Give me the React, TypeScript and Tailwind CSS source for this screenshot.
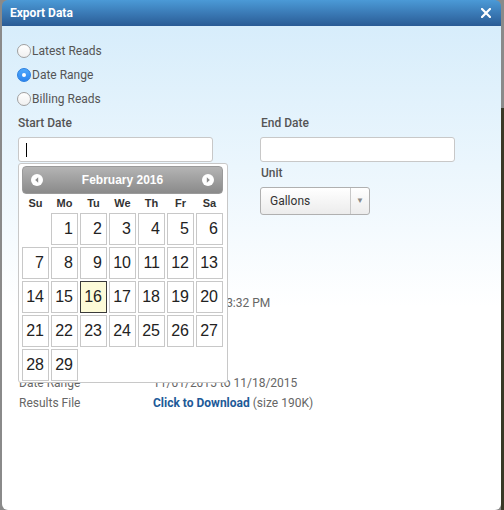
import React from "react";

function Radio({ checked, label }: { checked?: boolean; label: string }) {
  return (
    <div className="flex items-center h-[24px]">
      {checked ? (
        <span className="w-[14px] h-[14px] rounded-full bg-[linear-gradient(to_bottom,#4ea7fb,#2d86f0)] border border-[#2a7fe0] flex items-center justify-center">
          <span className="w-[4px] h-[4px] rounded-full bg-white" />
        </span>
      ) : (
        <span className="w-[14px] h-[14px] rounded-full bg-[linear-gradient(to_bottom,#ffffff,#f0f0f0)] border border-[#a0a0a0]" />
      )}
      <span className="ml-[1px] text-[12px] text-[#555]">{label}</span>
    </div>
  );
}

function NavIcon({ dir }: { dir: "prev" | "next" }) {
  return (
    <svg width="12" height="12" viewBox="0 0 12 12">
      <circle cx="6" cy="6" r="6" fill="#ffffff" />
      {dir === "prev" ? (
        <path d="M7.2 3.3 L4.2 6 L7.2 8.7 Z" fill="#8a8a8a" />
      ) : (
        <path d="M4.8 3.3 L7.8 6 L4.8 8.7 Z" fill="#8a8a8a" />
      )}
    </svg>
  );
}

function Calendar() {
  const cells: (number | null)[] = [null];
  for (let i = 1; i <= 29; i++) cells.push(i);
  const names = ["Su", "Mo", "Tu", "We", "Th", "Fr", "Sa"];
  return (
    <div className="absolute left-0 top-[52px] w-[210px] bg-white border border-[#c8c8c8] rounded-[3px] pt-[2px] pl-[3px] pr-[4px] pb-[1px] font-['Liberation_Sans',Arial,sans-serif] z-10">
      <div className="h-[28px] rounded-[4px] bg-[linear-gradient(to_bottom,#b4b4b4,#8a8a8a)] border border-[#9a9a9a] flex items-center justify-between px-[8px]">
        <NavIcon dir="prev" />
        <span className="text-white font-bold text-[12px]">February 2016</span>
        <NavIcon dir="next" />
      </div>
      <div className="grid grid-cols-7 gap-x-[2px] h-[19px] items-center">
        {names.map((n) => (
          <span key={n} className="text-center text-[11px] font-bold text-[#333]">
            {n}
          </span>
        ))}
      </div>
      <div className="grid grid-cols-7 gap-[2px]">
        {cells.map((d, i) =>
          d === null ? (
            <span key={i} className="h-[32px]" />
          ) : (
            <span
              key={i}
              className={
                d === 16
                  ? "h-[32px] border border-[#3a3a3a] bg-[#fdfbd8] flex items-center justify-end pr-[4px] text-[16px] text-[#222]"
                  : "h-[32px] border border-[#c8c8c8] bg-white flex items-center justify-end pr-[4px] text-[16px] text-[#222]"
              }
            >
              {d}
            </span>
          )
        )}
      </div>
    </div>
  );
}

function Row({ label, children }: { label: string; children: React.ReactNode }) {
  return (
    <div className="flex h-[20px] items-center text-[12px]">
      <span className="w-[134px] text-[#666]">{label}</span>
      <span className="text-[#666]">{children}</span>
    </div>
  );
}

export default function App() {
  return (
    <div className="w-[504px] h-[510px] flex bg-[#8a8a8a] font-['Roboto',sans-serif] overflow-hidden">
      <div className="w-[2px] shrink-0" />
      <div className="w-[499px] h-[510px] shrink-0 rounded-[6px] overflow-hidden flex flex-col">
        <div className="h-[26px] shrink-0 bg-[linear-gradient(to_bottom,#4b9ad7,#2a5b95)] flex items-center justify-between pl-[8px] pr-[10px]">
          <span className="text-white font-bold text-[12px]">Export Data</span>
          <svg width="10" height="10" viewBox="0 0 10 10">
            <path d="M1 1 L9 9 M9 1 L1 9" stroke="#ffffff" strokeWidth="2.2" strokeLinecap="square" />
          </svg>
        </div>
        <div className="flex-1 bg-[linear-gradient(to_bottom,#d7edfb,#ffffff_58%)] pl-[15px] pt-[13px]">
          <Radio label="Latest Reads" />
          <Radio label="Date Range" checked />
          <Radio label="Billing Reads" />
          <div className="grid grid-cols-[242px_1fr] pl-[1px]">
            <div className="relative">
              <div className="h-[24px] flex items-center text-[12px] font-medium text-[#555]">Start Date</div>
              <div className="mt-[2px] w-[195px] h-[25px] bg-white border border-[#c8c8c8] rounded-[3px] flex items-center pl-[7px]">
                <span className="w-[1px] h-[14px] bg-black" />
              </div>
              <Calendar />
            </div>
            <div>
              <div className="h-[24px] flex items-center pl-[1px] text-[12px] font-medium text-[#555]">End Date</div>
              <div className="mt-[2px] w-[195px] h-[25px] bg-white border border-[#c8c8c8] rounded-[3px]" />
              <div className="h-[22px] flex items-center pl-[1px] text-[12px] font-medium text-[#555]">Unit</div>
              <div className="mt-[3px] w-[110px] h-[28px] border border-[#b0b0b0] rounded-[3px] bg-[linear-gradient(to_bottom,#ffffff,#ececec)] flex items-center">
                <span className="flex-1 pl-[9px] text-[12px] text-[#333]">Gallons</span>
                <span className="w-[19px] h-full border-l border-[#c8c8c8] flex items-center justify-center text-[8px] text-[#888]">▼</span>
              </div>
            </div>
          </div>
          <div className="mt-[78px] pl-[2px]">
            <div className="flex h-[20px] items-center text-[12px]">
              <span className="w-[134px]" />
              <span className="text-[#666]">11/18/2015 - 3:32 PM</span>
            </div>
            <div className="h-[60px]" />
            <Row label="Date Range">11/01/2015 to 11/18/2015</Row>
            <Row label="Results File">
              <span className="font-bold text-[#1d5a98]">Click to Download</span> (size 190K)
            </Row>
          </div>
        </div>
      </div>
      <div className="w-[3px] shrink-0 flex flex-col">
        <div className="h-[108px] bg-[#8a8a8a]" />
        <div className="flex-1 bg-[#3a3826]" />
      </div>
    </div>
  );
}
